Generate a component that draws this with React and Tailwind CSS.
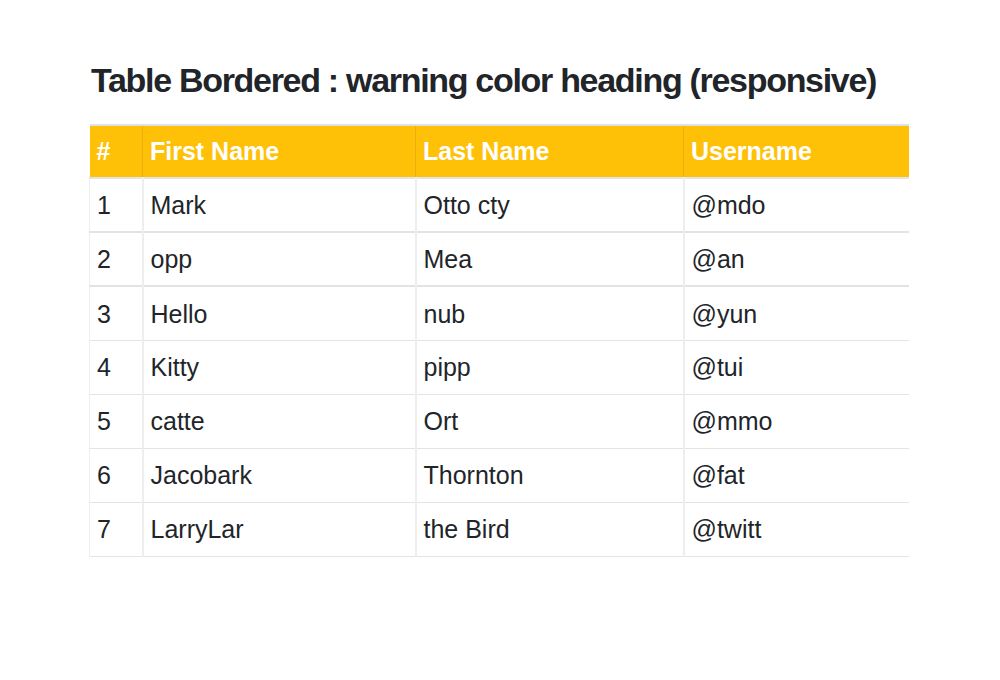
const rows = [
  ["1", "Mark", "Otto cty", "@mdo"],
  ["2", "opp", "Mea", "@an"],
  ["3", "Hello", "nub", "@yun"],
  ["4", "Kitty", "pipp", "@tui"],
  ["5", "catte", "Ort", "@mmo"],
  ["6", "Jacobark", "Thornton", "@fat"],
  ["7", "LarryLar", "the Bird", "@twitt"],
];

export default function App() {
  return (
    <div className="w-[1000px] h-[680px] bg-white text-[#212529] font-['Liberation_Sans',Arial,sans-serif]">
      <div className="pt-[57px] pl-[89px] w-[908px]">
        <h1 className="text-[34px] font-bold tracking-[-1.3px] leading-[46px] pl-[2px]">
          Table Bordered : warning color heading (responsive)
        </h1>
        <table className="mt-[21px] w-[819px] border-collapse text-[25px] table-fixed">
          <colgroup>
            <col className="w-[53px]" />
            <col className="w-[273px]" />
            <col className="w-[268px]" />
            <col className="w-[225px]" />
          </colgroup>
          <thead>
            <tr className="bg-[#ffc107] text-white border-t-2 border-t-[#dee2e6] border-b-2 border-b-[#e4e4e4]">
              <th className="h-[53px] text-left font-bold pl-[7px] border-r border-r-[#e8b20a]">#</th>
              <th className="text-left font-bold pl-[7px] border-r border-r-[#e8b20a]">First Name</th>
              <th className="text-left font-bold pl-[7px] border-r border-r-[#e8b20a]">Last Name</th>
              <th className="text-left font-bold pl-[7px]">Username</th>
            </tr>
          </thead>
          <tbody>
            {rows.map((r, i) => (
              <tr
                key={r[0]}
                className={
                  i < 2
                    ? "border-b-2 border-b-[#e2e3e5]"
                    : "border-b border-b-[#e4e4e6]"
                }
              >
                {r.map((c, j) => (
                  <td
                    key={j}
                    className={
                      "h-[54px] pl-[7px] pt-[2px] align-middle " +
                      (j === 0 ? "border-l border-l-[#eeeeee] " : "") +
                      (j < 3 ? "border-r-2 border-r-[#eeeeee]" : "")
                    }
                  >
                    {c}
                  </td>
                ))}
              </tr>
            ))}
          </tbody>
        </table>
      </div>
    </div>
  );
}
